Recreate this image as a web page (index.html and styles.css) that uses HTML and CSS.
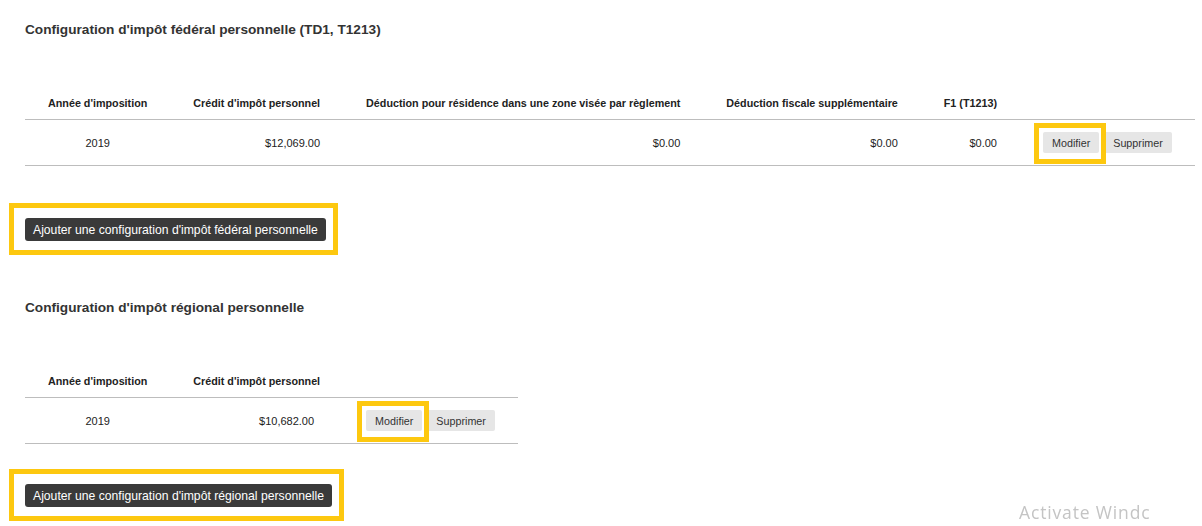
FILE: index.html
```html
<!DOCTYPE html>
<html lang="fr">
<head>
  <meta charset="UTF-8" />
  <meta name="viewport" content="width=device-width, initial-scale=1.0"/>
  <title>Configuration d'impôt</title>
  <link rel="stylesheet" href="styles.css">
</head>
<body>

  <div class="page">
    <!-- Federal -->
    <section class="tax-section federal">
      <h3 class="section-title">Configuration d'impôt fédéral personnelle (TD1, T1213)</h3>
      <table class="tax-table">
        <thead>
          <tr>
            <th class="center">Année d'imposition</th>
            <th>Crédit d'impôt personnel</th>
            <th>Déduction pour résidence dans une zone visée par règlement</th>
            <th>Déduction fiscale supplémentaire</th>
            <th>F1 (T1213)</th>
            <th></th>
          </tr>
        </thead>
        <tbody>
          <tr>
            <td class="center">2019</td>
            <td>$12,069.00</td>
            <td>$0.00</td>
            <td>$0.00</td>
            <td>$0.00</td>
            <td class="actions"><button class="btn-light marked">Modifier</button><button class="btn-light">Supprimer</button></td>
          </tr>
        </tbody>
      </table>
      <button class="btn-dark marked">Ajouter une configuration d'impôt fédéral personnelle</button>
    </section>

    <!-- Regional -->
    <section class="tax-section regional">
      <h3 class="section-title">Configuration d'impôt régional personnelle</h3>
      <table class="tax-table">
        <thead>
          <tr>
            <th class="center">Année d'imposition</th>
            <th>Crédit d'impôt personnel</th>
            <th></th>
          </tr>
        </thead>
        <tbody>
          <tr>
            <td class="center">2019</td>
            <td class="shifted">$10,682.00</td>
            <td class="actions"><button class="btn-light marked">Modifier</button><button class="btn-light">Supprimer</button></td>
          </tr>
        </tbody>
      </table>
      <button class="btn-dark marked">Ajouter une configuration d'impôt régional personnelle</button>
    </section>
  </div>

  <div class="watermark">Activate Windc</div>

</body>
</html>
```

FILE: styles.css
```css
html {
  overflow: hidden;
}
body {
  font-family: "Liberation Sans", Arial, sans-serif;
  background-color: #fff;
  color: #333;
  margin: 0;
  padding: 0;
}
.page {
  padding: 20px 0 30px 25px;
}
.section-title {
  font-size: 13.65px;
  line-height: 20px;
  font-weight: bold;
  color: #333;
  margin: 0;
}
.tax-table {
  border-collapse: collapse;
  margin-top: 47px;
}
.tax-table th {
  font-size: 10.75px;
  line-height: 14px;
  font-weight: bold;
  color: #222;
  text-align: right;
  padding: 9px 23px 9px 23px;
  border-bottom: 1px solid #bdbdbd;
  white-space: nowrap;
}
.tax-table td {
  font-size: 11px;
  line-height: 14px;
  color: #222;
  text-align: right;
  padding: 12px 23px;
  border-bottom: 1px solid #bdbdbd;
  white-space: nowrap;
}
.tax-table .center {
  text-align: center;
}
.tax-table td.shifted {
  padding-right: 29px;
}
.tax-table td.actions {
  text-align: left;
}
.btn-light {
  font-family: "Liberation Sans", Arial, sans-serif;
  font-size: 10.75px;
  height: 21px;
  padding: 0 9px;
  background-color: #e6e6e6;
  color: #333;
  border: none;
  border-radius: 2px;
  vertical-align: middle;
}
.btn-light + .btn-light {
  margin-left: 5px;
}
.btn-dark {
  font-family: "Liberation Sans", Arial, sans-serif;
  font-size: 12.2px;
  height: 23px;
  padding: 0 8px;
  background-color: #3a3a3a;
  color: #fff;
  border: none;
  border-radius: 3px;
  display: block;
}
.federal .btn-dark {
  margin-top: 52px;
}
.regional {
  margin-top: 57px;
}
.regional .btn-dark {
  margin-top: 40px;
}

/* yellow annotation boxes drawn over the buttons */
.marked {
  position: relative;
}
.marked::after {
  content: "";
  position: absolute;
  border: 5px solid #fdc80f;
  pointer-events: none;
  z-index: 2;
}
.btn-light.marked::after {
  top: -9px;
  bottom: -11px;
  left: -9px;
  right: -7px;
}
.btn-dark.marked::after {
  top: -15px;
  bottom: -14px;
  left: -16px;
  right: -12px;
}

.watermark {
  position: fixed;
  left: 1019px;
  top: 500px;
  white-space: nowrap;
  font-family: "Open Sans", "Noto Sans", sans-serif;
  font-size: 17.5px;
  letter-spacing: 0.85px;
  color: #c4c4c4;
}
```
